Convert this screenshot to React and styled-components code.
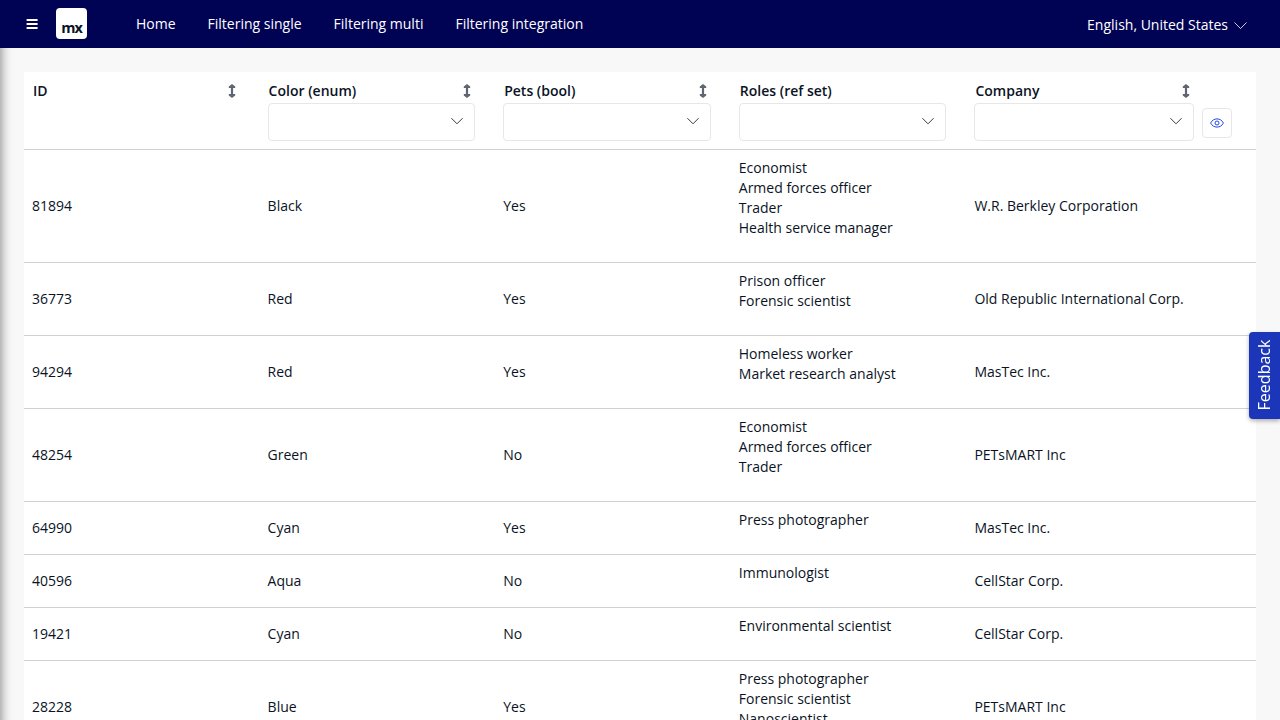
import React from "react";
import styled, { createGlobalStyle } from "styled-components";

const GlobalStyle = createGlobalStyle`
  *, *::before, *::after { box-sizing: border-box; }
  body {
    margin: 0;
    overflow: hidden;
    background: #f8f8f8;
    color: #0a1325;
    font: 14px/20px "Open Sans", "Noto Sans", sans-serif;
  }
  button { font: inherit; cursor: pointer; }
`;

const Page = styled.div`
  height: 100vh;
  display: flex;
  flex-direction: column;
  overflow: hidden;
`;

const TopBar = styled.header`
  flex: none;
  height: 48px;
  display: flex;
  align-items: center;
  padding: 0 33px 0 24px;
  background: #000254;
  color: #fff;
`;

const MenuButton = styled.button`
  display: flex;
  width: 16px;
  height: 16px;
  padding: 0;
  border: 0;
  background: none;
  color: inherit;
`;

const Logo = styled.div`
  width: 31px;
  height: 31px;
  margin: 0 33px 1px 16px;
  border-radius: 4px;
  background: #fff;
  color: #0a1325;
  font-weight: 700;
  font-size: 14.5px;
  line-height: 40px;
  letter-spacing: -1.1px;
  text-align: center;
`;

const Nav = styled.nav`
  flex: 1;
  display: flex;
`;

const NavLink = styled.a`
  padding: 0 16px;
  color: inherit;
`;

const Language = styled.div`
  display: flex;
  align-items: center;
  gap: 6px;
  padding-top: 2px;
`;

const Content = styled.main`
  position: relative;
  flex: 1;
  min-height: 0;
  padding: 24px;
  overflow: hidden;
`;

const SideShadow = styled.div`
  position: absolute;
  top: -12px;
  bottom: -12px;
  left: -12px;
  width: 12px;
  box-shadow: 0 0 12px rgba(0, 0, 0, 0.55);
`;

const Table = styled.div`
  background: #fff;
`;

const Row = styled.div`
  display: grid;
  grid-template-columns: repeat(5, 1fr) 54px;
  border-bottom: 1px solid #ced0d3;
`;

const HeadCell = styled.div`
  height: 77px;
  padding: 8px ${(p) => (p.$last ? 8 : 20)}px 8px 8px;
`;

const HeadTitle = styled.div`
  display: flex;
  justify-content: space-between;
  align-items: center;
  height: 22px;
  padding: 0 5px 0 1px;
  margin-bottom: 1px;
  font-weight: 600;
`;

const Filter = styled.div`
  display: flex;
  align-items: center;
  justify-content: flex-end;
  height: 38px;
  padding: 0 11px 2px;
  border: 1px solid #e7e7e9;
  border-radius: 4px;
`;

const ToggleCell = styled.div`
  display: flex;
  align-items: flex-end;
  padding-bottom: 11px;
`;

const ToggleButton = styled.button`
  display: flex;
  align-items: center;
  justify-content: center;
  width: 30px;
  height: 30px;
  padding: 0;
  border: 1px solid #e7e7e9;
  border-radius: 4px;
  background: #fff;
  color: #264ae5;
`;

const Cell = styled.div`
  display: flex;
  align-items: center;
  padding: 8px;
`;

const RoleCell = styled.div`
  padding: 8px 8px 24px;
`;

const Feedback = styled.button`
  position: fixed;
  top: 332px;
  right: 0;
  width: 31px;
  height: 87px;
  padding: 0 0 1px;
  display: flex;
  align-items: center;
  justify-content: center;
  border: 0;
  border-radius: 4px 0 0 4px;
  background: #1b36b8;
  color: #fff;
  box-shadow: 0 2px 4px rgba(0, 0, 0, 0.3);
`;

const FeedbackLabel = styled.span`
  font-size: 16px;
  transform: rotate(-90deg);
`;

const Chevron = ({ size = 12, color = "#222", weight = 0.9 }) => (
  <svg width={size} height={size} viewBox="0 0 12 12" fill="none" stroke={color}>
    <path d="M0.4 3.2 6 8.8l5.6-5.6" strokeWidth={weight} />
  </svg>
);

const SortIcon = () => (
  <svg width="6" height="14" viewBox="0 0 6 14" fill="#606671" overflow="visible">
    <path d="M3 0 6.200 2.600V4H4.100v6h2.100v1.400L3 14-.2 11.400V10h2.100V4H-.2V2.600z" />
  </svg>
);

const MenuIcon = () => (
  <svg width="16" height="16" viewBox="0 0 16 16" fill="currentColor">
    <path d="M2.600 3h11v2h-11zM2.600 7h11v2h-11zM2.600 11h11v2h-11z" />
  </svg>
);

const EyeIcon = () => (
  <svg width="14" height="14" viewBox="0 0 14 14" fill="none" stroke="currentColor">
    <path d="M.6 7C2 4.300 4.300 2.900 7 2.900S12 4.300 13.400 7C12 9.700 9.700 11.100 7 11.100S2 9.700.6 7z" />
    <circle cx="7" cy="7" r="2" />
  </svg>
);

const links = ["Home", "Filtering single", "Filtering multi", "Filtering integration"];
const columns = [
  { label: "ID", sortable: true },
  { label: "Color (enum)", sortable: true, filter: true },
  { label: "Pets (bool)", sortable: true, filter: true },
  { label: "Roles (ref set)", filter: true },
  { label: "Company", sortable: true, filter: true },
];
const rows = [
  ["81894", "Black", "Yes", ["Economist", "Armed forces officer", "Trader", "Health service manager"], "W.R. Berkley Corporation"],
  ["36773", "Red", "Yes", ["Prison officer", "Forensic scientist"], "Old Republic International Corp."],
  ["94294", "Red", "Yes", ["Homeless worker", "Market research analyst"], "MasTec Inc."],
  ["48254", "Green", "No", ["Economist", "Armed forces officer", "Trader"], "PETsMART Inc"],
  ["64990", "Cyan", "Yes", ["Press photographer"], "MasTec Inc."],
  ["40596", "Aqua", "No", ["Immunologist"], "CellStar Corp."],
  ["19421", "Cyan", "No", ["Environmental scientist"], "CellStar Corp."],
  ["28228", "Blue", "Yes", ["Press photographer", "Forensic scientist", "Nanoscientist"], "PETsMART Inc"],
];

export default function App() {
  return (
    <Page>
      <GlobalStyle />
      <TopBar>
        <MenuButton aria-label="Toggle menu"><MenuIcon /></MenuButton>
        <Logo>mx</Logo>
        <Nav>
          {links.map((l) => <NavLink key={l}>{l}</NavLink>)}
        </Nav>
        <Language>
          English, United States
          <Chevron size={13} color="#fff" weight={0.75} />
        </Language>
      </TopBar>
      <Content>
        <SideShadow />
        <Table>
          <Row>
            {columns.map((c, i) => (
              <HeadCell key={c.label} $last={i === columns.length - 1}>
                <HeadTitle>
                  {c.label}
                  {c.sortable && <SortIcon />}
                </HeadTitle>
                {c.filter && <Filter><Chevron /></Filter>}
              </HeadCell>
            ))}
            <ToggleCell>
              <ToggleButton aria-label="Column selector"><EyeIcon /></ToggleButton>
            </ToggleCell>
          </Row>
          {rows.map(([id, color, pets, roles, company]) => (
            <Row key={id}>
              <Cell>{id}</Cell>
              <Cell>{color}</Cell>
              <Cell>{pets}</Cell>
              <RoleCell>
                {roles.map((r) => <div key={r}>{r}</div>)}
              </RoleCell>
              <Cell>{company}</Cell>
            </Row>
          ))}
        </Table>
      </Content>
      <Feedback><FeedbackLabel>Feedback</FeedbackLabel></Feedback>
    </Page>
  );
}
